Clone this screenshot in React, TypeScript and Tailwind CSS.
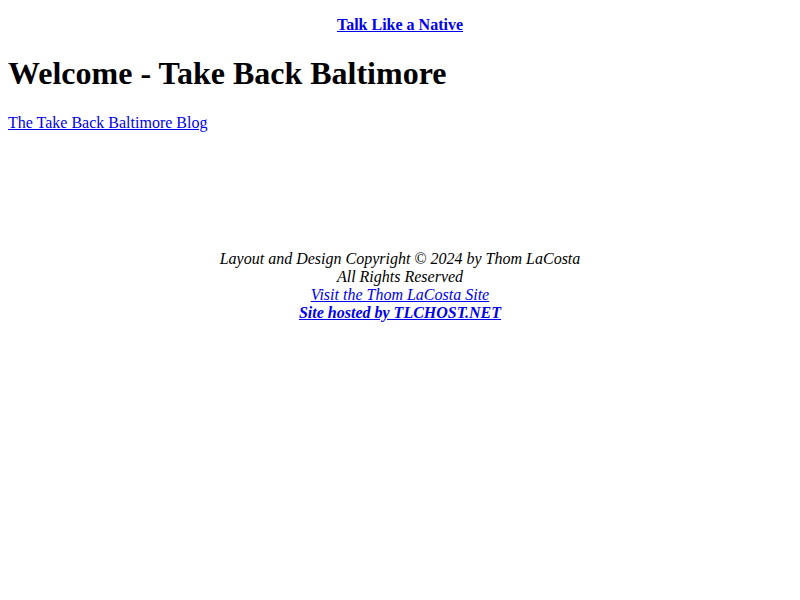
import React from "react"

const linkClass = "text-[#0000ee] underline"

const App = () => {
  return (
    <div className="min-h-[600px] bg-white text-black font-['Liberation_Serif',serif] text-[16px] leading-[normal] px-2 pt-4">
      <p className="text-center font-bold">
        <a href="#" className={linkClass}>
          Talk Like a Native
        </a>
      </p>
      <h1 className="mt-[21.44px] mb-[21.44px] text-[32px] font-bold leading-[normal]">
        Welcome - Take Back Baltimore
      </h1>
      <p>
        <a href="#" className={linkClass}>
          The Take Back Baltimore Blog
        </a>
      </p>
      <div className="mt-[118px] text-center italic">
        <div>Layout and Design Copyright © 2024 by Thom LaCosta</div>
        <div>All Rights Reserved</div>
        <div>
          <a href="#" className={linkClass}>
            Visit the Thom LaCosta Site
          </a>
        </div>
        <div className="font-bold">
          <a href="#" className={linkClass}>
            Site hosted by TLCHOST.NET
          </a>
        </div>
      </div>
    </div>
  )
}

export default App
